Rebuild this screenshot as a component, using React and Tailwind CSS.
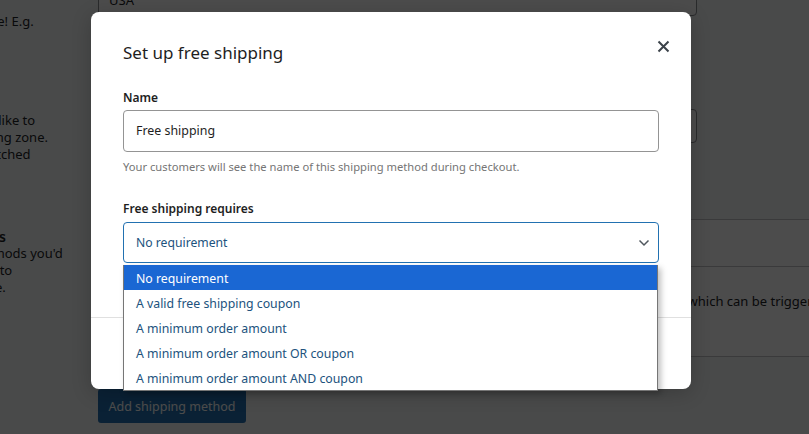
import React from "react";

const options = [
	"No requirement",
	"A valid free shipping coupon",
	"A minimum order amount",
	"A minimum order amount OR coupon",
	"A minimum order amount AND coupon",
];

function CloseIcon() {
	return (
		<svg width="13" height="13" viewBox="0 0 13 13" fill="none">
			<path d="M1.5 1.5l10 10M11.5 1.5l-10 10" stroke="#3c434a" strokeWidth="2" />
		</svg>
	);
}

function Chevron() {
	return (
		<svg width="12" height="8" viewBox="0 0 12 8" fill="none">
			<path d="M1.5 1.5l4.5 4.5 4.5-4.5" stroke="#50575e" strokeWidth="1.5" />
		</svg>
	);
}

// page behind the modal (mostly hidden by the overlay)
function ZonePage() {
	return (
		<div className="flex flex-col text-[13px] leading-[17px] text-[#1d2327]">
			{/* zone name */}
			<div className="flex h-[125px] -mt-[16px]">
				<div className="-ml-[135px] w-[215px] shrink-0 pt-[8px]">
					<div className="font-semibold whitespace-nowrap">Zone name</div>
					<div className="mt-[4px] whitespace-nowrap">Give your zone a name! E.g.</div>
					<div className="whitespace-nowrap">Local, or Worldwide.</div>
				</div>
				<div className="ml-[18px] w-[599px] h-[32px] shrink-0 flex items-center px-[10px] border border-[#8c8f94] rounded-[4px] bg-white">
					USA
				</div>
			</div>

			{/* zone regions */}
			<div className="flex h-[110px]">
				<div className="-ml-[135px] w-[215px] shrink-0 -mt-[18px]">
					<div className="font-semibold whitespace-nowrap">Zone regions</div>
					<div className="mt-[4px] whitespace-nowrap">List the regions you'd like to</div>
					<div className="whitespace-nowrap">include in your shipping zone.</div>
					<div className="whitespace-nowrap">Customers will be matched</div>
					<div className="whitespace-nowrap">against these regions.</div>
				</div>
				<div className="ml-[18px] w-[599px] h-[34px] shrink-0 flex items-center px-[10px] border border-[#8c8f94] rounded-[4px] bg-white">
					Start typing to filter zones
				</div>
			</div>

			{/* shipping methods */}
			<div className="flex">
				<div className="-ml-[135px] w-[215px] shrink-0 mt-[9px]">
					<div className="ml-[17px] text-[14px] font-semibold whitespace-nowrap">Shipping methods</div>
					<div className="whitespace-nowrap">Add the shipping methods you'd</div>
					<div className="whitespace-nowrap">like to make available to</div>
					<div className="whitespace-nowrap">customers in this zone.</div>
				</div>
				<div className="ml-[18px] flex flex-col shrink-0">
					<div className="w-[760px] border-y border-[#c3c4c7] bg-white">
						<div className="flex h-[47px] items-center border-b border-[#c3c4c7] font-semibold">
							<div className="w-[220px] shrink-0 pl-[16px]">Title</div>
							<div className="w-[163px] shrink-0">Enabled</div>
							<div>Description</div>
						</div>
						<div className="flex h-[89px] items-start pt-[26px]">
							<div className="w-[220px] shrink-0 pl-[16px]">Free shipping</div>
							<div className="w-[163px] shrink-0">Yes</div>
							<div className="whitespace-nowrap">
								Free shipping is a special method which can be triggered with coupons and minimum spends.
							</div>
						</div>
					</div>
					<button className="mt-[32px] w-[148px] h-[34px] rounded-[3px] bg-[#2271b1] text-white text-[12.5px]">
						Add shipping method
					</button>
				</div>
			</div>
		</div>
	);
}

export default function App() {
	return (
		<div className="relative w-[809px] h-[434px] overflow-hidden bg-[#f6f7f7] font-['Noto_Sans',sans-serif]">
			<ZonePage />

			{/* overlay */}
			<div className="absolute inset-0 bg-black/70"></div>

			{/* modal */}
			<div className="absolute left-[91px] top-[12px] w-[600px] h-[377px] flex flex-col bg-white rounded-[8px] shadow-[0_4px_20px_rgba(0,0,0,0.2)]">
				<div className="flex items-start justify-between pl-[32px] pr-[16px] pt-[28px]">
					<h1 className="text-[17px] leading-[26px] text-[#1e1e1e]">Set up free shipping</h1>
					<button className="w-[24px] h-[24px] -mt-[6px] flex items-center justify-center">
						<CloseIcon />
					</button>
				</div>

				<div className="flex-1 px-[32px]">
					<label className="block mt-[24px] text-[12px] leading-[16px] font-semibold text-[#1e1e1e]">
						Name
					</label>
					<div className="mt-[4px] h-[42px] flex items-center px-[12px] pt-[1px] border border-[#949494] rounded-[4px] text-[12.4px] text-[#1e1e1e]">
						Free shipping
					</div>
					<p className="mt-[7px] text-[11.2px] leading-[16px] text-[#757575]">
						Your customers will see the name of this shipping method during checkout.
					</p>

					<label className="block mt-[26px] text-[12px] leading-[16px] font-semibold text-[#1e1e1e]">
						Free shipping requires
					</label>
					<div className="relative mt-[5px]">
						<div className="h-[41px] flex items-center justify-between pl-[12px] pr-[8px] pt-[1px] border-[1.5px] border-[#2271b1] rounded-[4px] text-[12.2px] text-[#21527d]">
							<span>No requirement</span>
							<Chevron />
						</div>
						<ul className="absolute left-0 top-full mt-[2px] w-[535px] bg-white border border-t-0 border-[#767676] shadow-[3px_3px_6px_rgba(0,0,0,0.25)] z-10">
							{options.map((opt, i) => (
								<li
									key={opt}
									className={
										i === 0
											? "h-[25px] flex items-center pl-[12px] pt-[3px] text-[12.3px] bg-[#1a67d3] text-white"
											: "h-[25px] flex items-center pl-[12px] pt-[3px] text-[12.3px] text-[#21527d]"
									}
								>
									{opt}
								</li>
							))}
						</ul>
					</div>
				</div>

				<div className="h-[72px] flex items-center justify-end pr-[34px] border-t border-[#e0e0e0]">
					<button className="h-[36px] px-[12px] rounded-[2px] bg-[#3858e9] text-white text-[13px]">
						Create and save
					</button>
				</div>
			</div>
		</div>
	);
}
